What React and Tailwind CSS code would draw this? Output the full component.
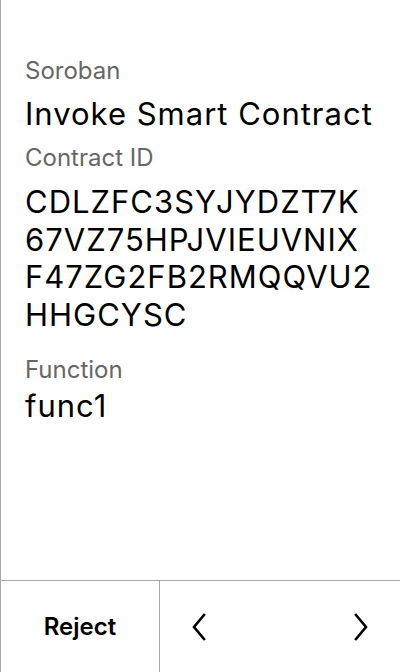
import React from 'react';

function Chevron({ dir = 'left' }) {
  return (
    <svg width="16" height="28" viewBox="0 0 16 28" fill="none" aria-hidden="true">
      <polyline
        points={dir === 'left' ? '13,2 3,14 13,26' : '3,2 13,14 3,26'}
        stroke="#000"
        strokeWidth="2.6"
        strokeLinecap="square"
        strokeLinejoin="miter"
      />
    </svg>
  );
}

const label = 'text-[24px] leading-[30px] text-[#666]';
const value = 'break-all text-[31px] leading-[37.4px] tracking-[1px] text-black';

// contract id as the device wraps it
const contractLines = ['CDLZFC3SYJYDZT7K', '67VZ75HPJVIEUVNIX', 'F47ZG2FB2RMQQVU2', 'HHGCYSC'];

export default function App() {
  return (
    <div
      className="flex h-[672px] w-[400px] flex-col border-l border-[#a8a8a8] bg-white"
      style={{ fontFamily: 'Inter, "Noto Sans", sans-serif' }}
    >
      <div className="flex flex-1 flex-col pl-6 pr-4 pt-[56px]">
        <div className={label}>Soroban</div>
        <div className={`mt-[9px] ${value}`}>Invoke Smart Contract</div>
        <div className={`mt-[11px] ${label}`}>Contract ID</div>
        <div className={`mt-[10px] ${value}`}>
          {contractLines.map((line, i) => (
            <React.Fragment key={line}>
              {line}
              {i < contractLines.length - 1 && <br />}
            </React.Fragment>
          ))}
        </div>
        <div className={`mt-[22px] ${label}`}>Function</div>
        <div className={`mt-[2px] ${value}`}>func1</div>
      </div>
      <div className="flex h-[92px] border-t border-[#a8a8a8]">
        <button className="flex w-[159px] items-center justify-center border-r border-[#a8a8a8] text-[24px] font-semibold text-black">
          Reject
        </button>
        <div className="flex flex-1 items-center justify-between px-[31px]">
          <Chevron dir="left" />
          <Chevron dir="right" />
        </div>
      </div>
    </div>
  );
}
